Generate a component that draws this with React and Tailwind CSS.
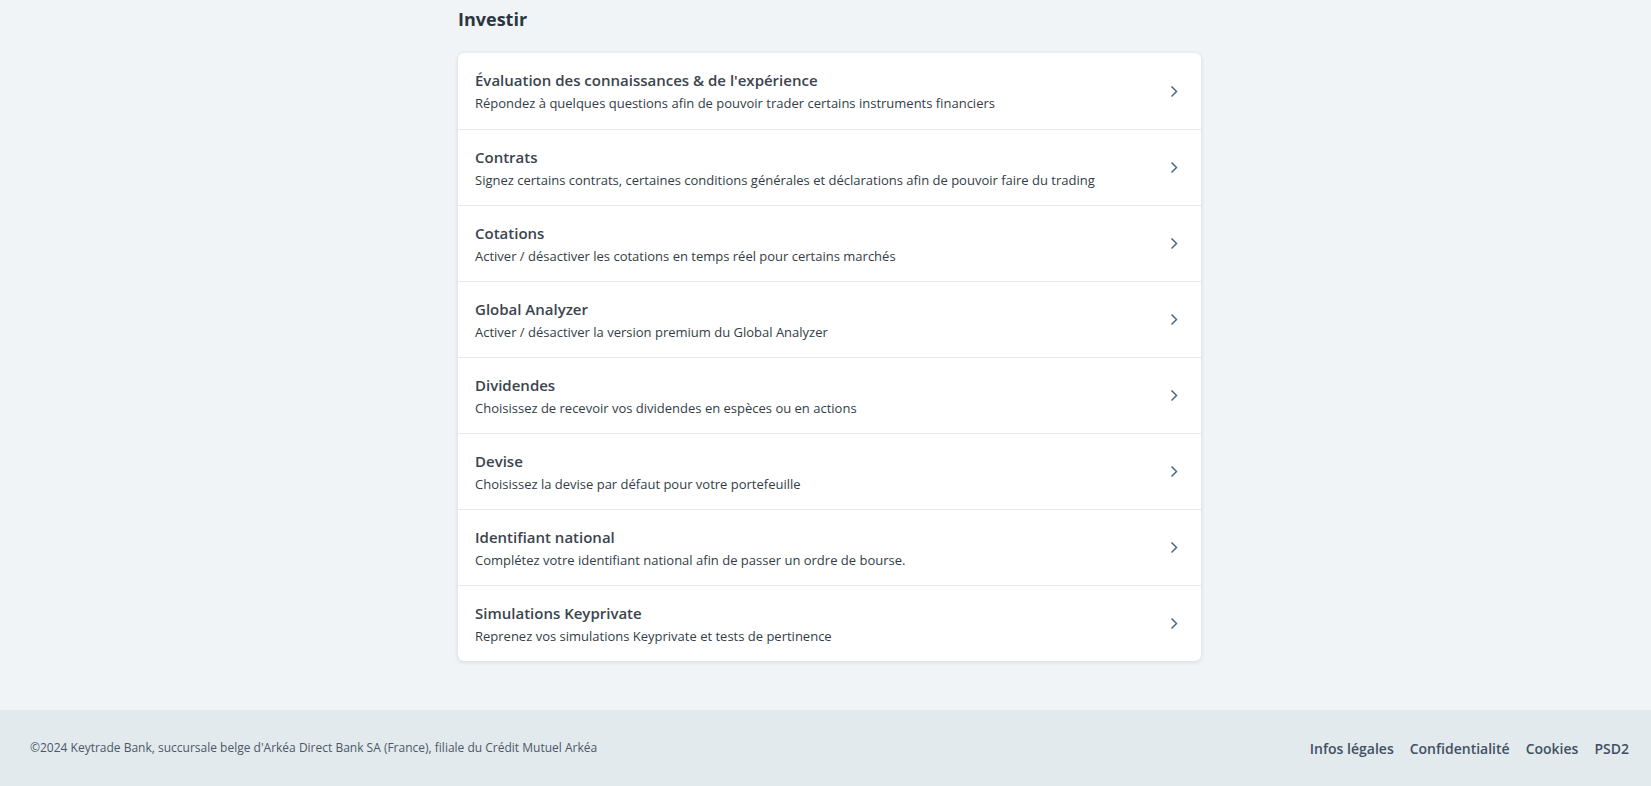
import React from "react";

const items = [
  {
    title: "Évaluation des connaissances & de l'expérience",
    desc: "Répondez à quelques questions afin de pouvoir trader certains instruments financiers",
  },
  {
    title: "Contrats",
    desc: "Signez certains contrats, certaines conditions générales et déclarations afin de pouvoir faire du trading",
  },
  {
    title: "Cotations",
    desc: "Activer / désactiver les cotations en temps réel pour certains marchés",
  },
  {
    title: "Global Analyzer",
    desc: "Activer / désactiver la version premium du Global Analyzer",
  },
  {
    title: "Dividendes",
    desc: "Choisissez de recevoir vos dividendes en espèces ou en actions",
  },
  {
    title: "Devise",
    desc: "Choisissez la devise par défaut pour votre portefeuille",
  },
  {
    title: "Identifiant national",
    desc: "Complétez votre identifiant national afin de passer un ordre de bourse.",
  },
  {
    title: "Simulations Keyprivate",
    desc: "Reprenez vos simulations Keyprivate et tests de pertinence",
  },
];

const Chevron = () => (
  <svg width="8" height="13" viewBox="0 0 8 13" fill="none">
    <path d="M1.5 1.5L6.5 6.5L1.5 11.5" stroke="#4d6a85" strokeWidth="1.5" />
  </svg>
);

export default function App() {
  return (
    <div
      className="min-h-[786px] flex flex-col bg-[#f0f4f7] text-[#2f3a44]"
      style={{ fontFamily: '"Open Sans", "Liberation Sans", sans-serif' }}
    >
      <main className="flex-1 pl-[458px] pb-[49px]">
        <h1 className="h-[53px] pt-[6px] text-[18px] font-bold text-[#2b3640]">
          Investir
        </h1>
        <div className="w-[743px] bg-white rounded-[6px] shadow-[0_1px_4px_rgba(30,50,70,0.15)]">
          {items.map((item, i) => (
            <div
              key={item.title}
              className={
                "h-[76px] flex items-center pl-[17px] pr-[23px] " +
                (i > 0 ? "border-t border-[#e5e9ec]" : "")
              }
            >
              <div className="flex-1">
                <div className="text-[15px] font-semibold leading-[21px] text-[#3a444e]">
                  {item.title}
                </div>
                <div className="mt-[3px] text-[13px] leading-[18px] text-[#333d47]">
                  {item.desc}
                </div>
              </div>
              <Chevron />
            </div>
          ))}
        </div>
      </main>
      <footer className="h-[76px] bg-[#e3eaee] flex items-center justify-between pl-[30px] pr-[22px]">
        <span className="text-[12px] text-[#4a5866]">
          ©2024 Keytrade Bank, succursale belge d'Arkéa Direct Bank SA (France), filiale du Crédit Mutuel Arkéa
        </span>
        <nav className="flex gap-[16px] text-[14px] font-semibold text-[#3f5062]">
          <a>Infos légales</a>
          <a>Confidentialité</a>
          <a>Cookies</a>
          <a>PSD2</a>
        </nav>
      </footer>
    </div>
  );
}
